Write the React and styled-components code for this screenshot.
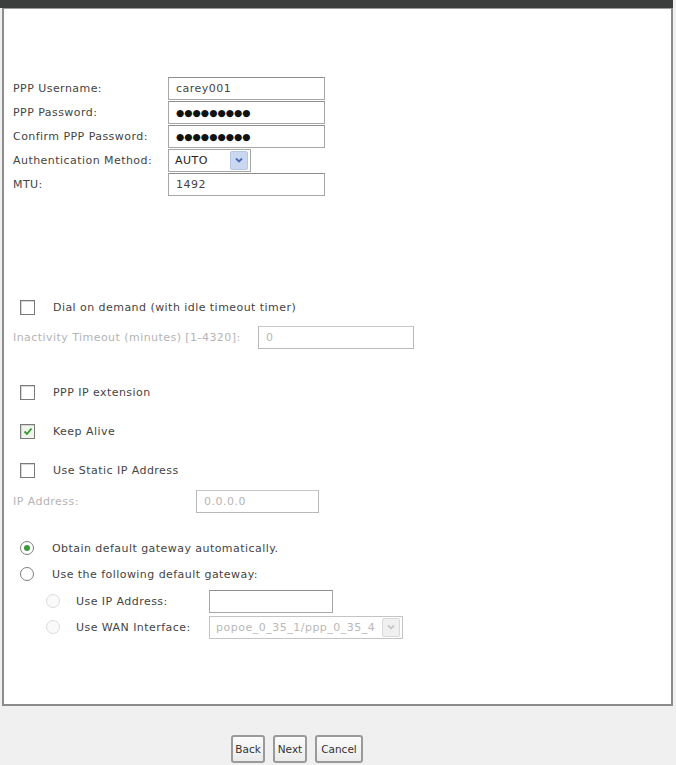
import React from 'react';
import styled, { createGlobalStyle } from 'styled-components';

const GlobalStyle = createGlobalStyle`
  html, body {
    margin: 0;
    padding: 0;
    background: #f0f0f0;
  }
  body {
    font-family: "DejaVu Sans", Verdana, sans-serif;
    font-size: 11px;
    color: #333;
  }
`;

const Page = styled.div`
  width: 673px;
  height: 765px;
  display: flex;
  flex-direction: column;
`;

const TitleBar = styled.div`
  height: 8px;
  background: #3c3e3e;
`;

const Panel = styled.div`
  height: 698px;
  box-sizing: border-box;
  margin-left: 2px;
  background: #fff;
  border: 2px solid #8c8c8c;
  border-top: 1px solid #9a9a9a;
  padding: 0 0 0 9px;
  display: flex;
  flex-direction: column;
`;

const FieldGrid = styled.div`
  margin-top: 67px;
  display: grid;
  grid-template-columns: 155px auto;
  grid-auto-rows: 24px;
  align-items: center;
`;

const Label = styled.span`
  flex: none;
  width: ${({ $w }) => ($w ? `${$w}px` : 'auto')};
  font-size: 11px;
  letter-spacing: 0.45px;
  color: ${({ $muted }) => ($muted ? '#b4b4b4' : '#444')};
  white-space: nowrap;
`;

const TextBox = styled.div`
  box-sizing: border-box;
  width: ${({ $w }) => $w}px;
  height: 23px;
  border: 1px solid ${({ $muted }) => ($muted ? '#b8b8b8' : '#a6a6a6')};
  border-top-color: ${({ $muted }) => ($muted ? '#c8c8c8' : '#8e8e8e')};
  background: #fff;
  padding-left: 7px;
  display: flex;
  align-items: center;
  font-size: 11px;
  letter-spacing: 0.5px;
  color: ${({ $muted }) => ($muted ? '#b5b5b5' : '#444')};
`;

const Dots = styled.span`
  font-size: 9.5px;
  letter-spacing: 0;
  color: #111;
`;

const Select = styled.div`
  box-sizing: border-box;
  width: ${({ $w }) => $w}px;
  height: 23px;
  overflow: hidden;
  border: 1px solid ${({ $muted }) => ($muted ? '#c4c4c4' : '#a6a6a6')};
  background: #fff;
  display: flex;
  align-items: center;
  padding: 0 2px 0 6px;
  font-size: 11px;
  letter-spacing: 0.5px;
  color: ${({ $muted }) => ($muted ? '#b8b8b8' : '#222')};
`;

const SelectValue = styled.span`
  flex: 1;
  overflow: hidden;
  white-space: nowrap;
`;

const DropButton = styled.span`
  flex: none;
  width: 16px;
  height: 17px;
  border-radius: 2px;
  background: ${({ $muted }) => ($muted ? '#f0f0f0' : '#c9d7f0')};
  border: 1px solid ${({ $muted }) => ($muted ? '#d8d8d8' : '#b5c6e6')};
  display: flex;
  align-items: center;
  justify-content: center;
`;

const Chevron = ({ muted }) => (
  <svg width="8" height="6" viewBox="0 0 8 6">
    <path d="M1 1.5 L4 4.5 L7 1.5" fill="none" stroke={muted ? '#c8c8c8' : '#4a6cb8'} strokeWidth="1.8" />
  </svg>
);

const Row = styled.div`
  height: 24px;
  margin-top: ${({ $mt }) => $mt}px;
  display: flex;
  align-items: center;
`;

const Box = styled.span`
  box-sizing: border-box;
  width: 15px;
  height: 15px;
  margin: 0 18px 0 7px;
  border: 1px solid #7a7a7a;
  background: ${({ $checked }) => ($checked ? '#eef6ea' : '#fff')};
  box-shadow: inset 1px 1px 0 #d8d8d8;
  display: flex;
  align-items: center;
  justify-content: center;
`;

const Radio = styled.span`
  box-sizing: border-box;
  width: 14px;
  height: 14px;
  margin: 0 ${({ $gap }) => $gap}px 0 ${({ $ml }) => $ml}px;
  border-radius: 50%;
  border: 1px solid ${({ $muted }) => ($muted ? '#dcdcdc' : '#7e7e7e')};
  background: ${({ $muted }) => ($muted ? '#fafafa' : '#fff')};
  display: flex;
  align-items: center;
  justify-content: center;

  &::after {
    content: '';
    display: ${({ $on }) => ($on ? 'block' : 'none')};
    width: 6px;
    height: 6px;
    border-radius: 50%;
    background: #3d9a3d;
  }
`;

const Footer = styled.div`
  flex: 1;
  display: flex;
  align-items: flex-end;
  gap: 8px;
  padding: 0 0 2px 231px;
`;

const Button = styled.button`
  box-sizing: border-box;
  height: 28px;
  width: ${({ $w }) => $w}px;
  padding: 0;
  border: 2px solid #9a9a9a;
  border-radius: 3px;
  background: linear-gradient(#fbfbfb, #ebebeb);
  font-family: "DejaVu Sans", Verdana, sans-serif;
  font-size: 10.5px;
  color: #333;
`;

export default function App() {
  return (
    <Page>
      <GlobalStyle />
      <TitleBar />
      <Panel>
        <FieldGrid>
          <Label>PPP Username:</Label>
          <TextBox $w={157}>carey001</TextBox>
          <Label>PPP Password:</Label>
          <TextBox $w={157}><Dots>●●●●●●●●●</Dots></TextBox>
          <Label>Confirm PPP Password:</Label>
          <TextBox $w={157}><Dots>●●●●●●●●●</Dots></TextBox>
          <Label>Authentication Method:</Label>
          <Select $w={83}>
            <SelectValue>AUTO</SelectValue>
            <DropButton><Chevron /></DropButton>
          </Select>
          <Label>MTU:</Label>
          <TextBox $w={157}>1492</TextBox>
        </FieldGrid>

        <Row $mt={99}>
          <Box />
          <Label>Dial on demand (with idle timeout timer)</Label>
        </Row>
        <Row $mt={6}>
          <Label $muted $w={245}>Inactivity Timeout (minutes) [1-4320]:</Label>
          <TextBox $w={156} $muted>0</TextBox>
        </Row>

        <Row $mt={31}>
          <Box />
          <Label>PPP IP extension</Label>
        </Row>
        <Row $mt={15}>
          <Box $checked>
            <svg width="10" height="9" viewBox="0 0 10 9">
              <path d="M1.5 4.5 L4 7 L8.5 1.5" fill="none" stroke="#2f9a2f" strokeWidth="1.8" />
            </svg>
          </Box>
          <Label>Keep Alive</Label>
        </Row>
        <Row $mt={15}>
          <Box />
          <Label>Use Static IP Address</Label>
        </Row>
        <Row $mt={7}>
          <Label $muted $w={183}>IP Address:</Label>
          <TextBox $w={123} $muted>0.0.0.0</TextBox>
        </Row>

        <Row $mt={23}>
          <Radio $ml={7} $gap={18} $on />
          <Label>Obtain default gateway automatically.</Label>
        </Row>
        <Row $mt={2}>
          <Radio $ml={7} $gap={18} />
          <Label>Use the following default gateway:</Label>
        </Row>
        <Row $mt={3}>
          <Radio $ml={33} $gap={16} $muted />
          <Label $w={133}>Use IP Address:</Label>
          <TextBox $w={124} />
        </Row>
        <Row $mt={2}>
          <Radio $ml={33} $gap={16} $muted />
          <Label $w={133}>Use WAN Interface:</Label>
          <Select $w={194} $muted>
            <SelectValue>popoe_0_35_1/ppp_0_35_4</SelectValue>
            <DropButton $muted><Chevron muted /></DropButton>
          </Select>
        </Row>
      </Panel>
      <Footer>
        <Button $w={34}>Back</Button>
        <Button $w={34}>Next</Button>
        <Button $w={48}>Cancel</Button>
      </Footer>
    </Page>
  );
}
